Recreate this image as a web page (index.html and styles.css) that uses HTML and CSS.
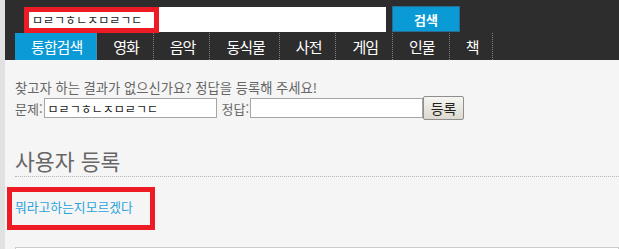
FILE: index.html
```html
<!DOCTYPE html>
<html lang="ko">
<head>
    <meta charset="UTF-8">
    <title>사용자 등록</title>
    <link rel="stylesheet" href="styles.css">
</head>
<body>
    <div class="page">
        <div class="edge"></div>
        <div class="main">
            <div class="header">
                <div class="search-row">
                    <div class="search-box">
                        <input class="search-input" type="text" value="ㅁㄹㄱㅎㄴㅈㅁㄹㄱㄷ">
                        <div class="mark mark-search"></div>
                    </div>
                    <button class="search-button">검색</button>
                </div>
                <div class="tabs">
                    <a class="tab active">통합검색</a>
                    <a class="tab">영화</a>
                    <a class="tab">음악</a>
                    <a class="tab">동식물</a>
                    <a class="tab">사전</a>
                    <a class="tab">게임</a>
                    <a class="tab">인물</a>
                    <a class="tab">책</a>
                </div>
            </div>

            <div class="content">
                <p class="notice">찾고자 하는 결과가 없으신가요? 정답을 등록해 주세요!</p>
                <div class="register-row">
                    <label class="field-label">문제:</label>
                    <input class="field" type="text" value="ㅁㄹㄱㅎㄴㅈㅁㄹㄱㄷ">
                    <label class="field-label second">정답:</label>
                    <input class="field" type="text">
                    <button class="register-button">등록</button>
                </div>

                <h2 class="section-title">사용자 등록</h2>

                <div class="answer">
                    <a class="answer-link" href="#">뭐라고하는지모르겠다</a>
                    <div class="mark mark-answer"></div>
                </div>

                <div class="comment-box"></div>
            </div>
        </div>
    </div>
</body>
</html>
```

FILE: styles.css
```css
body {
    margin: 0;
    font-family: "Noto Sans CJK KR", "Noto Sans", sans-serif;
    background: #f5f5f5;
    overflow: hidden;
}
.page {
    display: flex;
    height: 249px;
    overflow: hidden;
}
.edge {
    width: 5px;
    background: #e1e1e1;
}
.main {
    flex: 1;
    background: #f5f5f5;
}
.header {
    background: #2d2d2d;
    padding-top: 6px;
}
.search-row {
    display: flex;
    align-items: flex-start;
    height: 27px;
    padding-left: 19px;
}
.search-box {
    position: relative;
    margin-top: 1px;
}
.search-input {
    display: block;
    box-sizing: border-box;
    width: 362px;
    height: 25px;
    border: none;
    padding: 0 0 0 8px;
    font-family: inherit;
    font-size: 12px;
    color: #222;
    background: #fff;
}
.search-button {
    margin-left: 6px;
    width: 68px;
    height: 26px;
    border: 1px solid #2a6d93;
    background: #0a9ad6;
    color: #fff;
    font-family: inherit;
    font-size: 13px;
    font-weight: bold;
    padding: 0;
}
.tabs {
    display: flex;
    height: 27px;
    padding-left: 10px;
}
.tab {
    display: block;
    padding: 0 14px 0 16px;
    line-height: 27px;
    font-size: 15px;
    letter-spacing: -1px;
    color: #fff;
    border-right: 1px dotted #808080;
}
.tab.active {
    background: #0a9ad6;
}
.mark {
    position: absolute;
    box-sizing: border-box;
    border: 5px solid #ed1c24;
}
.mark-search {
    left: 0;
    top: 0;
    width: 135px;
    height: 26px;
}
.content {
    padding: 20px 0 0 10px;
}
.notice {
    margin: 0;
    font-size: 13.3px;
    line-height: 16px;
    color: #666;
}
.register-row {
    display: flex;
    align-items: center;
    height: 24px;
}
.field-label {
    font-size: 13px;
    color: #666;
}
.field-label.second {
    margin-left: 5px;
}
.field {
    box-sizing: border-box;
    width: 173px;
    height: 20px;
    margin-left: 1px;
    border: 1px solid #a5a5a5;
    padding: 0 0 0 3px;
    font-family: inherit;
    font-size: 12px;
    color: #222;
    background: #fff;
}
.register-button {
    box-sizing: border-box;
    width: 41px;
    height: 24px;
    border: 1px solid #8e8e8e;
    border-radius: 2px;
    background: linear-gradient(#f6f5f1, #dcd9d0);
    font-family: inherit;
    font-size: 14px;
    color: #222;
    padding: 0;
}
.section-title {
    margin: 28px 0 0;
    padding-bottom: 3px;
    font-size: 21.6px;
    font-weight: normal;
    line-height: 25px;
    color: #666;
    border-bottom: 1px dotted #b5b5b5;
}
.answer {
    position: relative;
    margin-top: 20px;
    line-height: 16px;
}
.answer-link {
    font-size: 12.8px;
    color: #2aa3dc;
    text-decoration: none;
}
.mark-answer {
    left: -8px;
    top: -10px;
    width: 148px;
    height: 43px;
}
.comment-box {
    margin-top: 32px;
    height: 40px;
    background: #fff;
    border: 1px solid #cccccc;
}
```
